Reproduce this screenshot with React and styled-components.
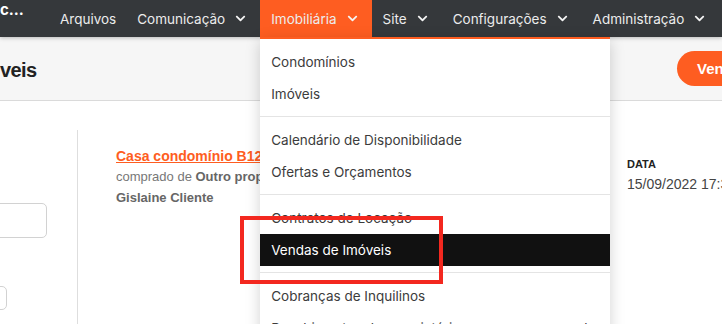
import React from 'react';
import styled, { createGlobalStyle } from 'styled-components';
import { FaChevronDown } from 'react-icons/fa';

const GlobalStyle = createGlobalStyle`
    html, body {
        margin: 0;
        padding: 0;
        background: #fff;
        overflow: hidden;
    }
    * { box-sizing: border-box; }
`;

const ORANGE = '#fe5d21';

// menus do topo
const navItems = [
    { label: 'Arquivos', caret: false },
    { label: 'Comunicação', caret: true },
    { label: 'Imobiliária', caret: true, active: true },
    { label: 'Site', caret: true },
    { label: 'Configurações', caret: true },
    { label: 'Administração', caret: true },
];

// itens do dropdown da Imobiliária, null = divisor
const menuItems = [
    'Condomínios',
    'Imóveis',
    null,
    'Calendário de Disponibilidade',
    'Ofertas e Orçamentos',
    null,
    'Contratos de Locação',
    'Vendas de Imóveis',
    null,
    'Cobranças de Inquilinos',
    'Recebimentos de proprietários e repasses a receber',
];

const App = () => {
    return (
        <Page>
            <GlobalStyle />
            <NavBar>
                <Brand>c...</Brand>
                {navItems.map((item) => (
                    <NavItem key={item.label} $active={item.active} $caret={item.caret}>
                        {item.label}
                        {item.caret && <Caret />}
                        {item.active && (
                            <Dropdown>
                                {menuItems.map((m, i) =>
                                    m === null ? (
                                        <MenuDivider key={i} />
                                    ) : (
                                        <MenuItem key={i} $active={m === 'Vendas de Imóveis'}>
                                            {m}
                                        </MenuItem>
                                    )
                                )}
                            </Dropdown>
                        )}
                    </NavItem>
                ))}
            </NavBar>

            <PageHeader>
                <Title>veis</Title>
                <ActionButton>Vender imóvel</ActionButton>
            </PageHeader>

            <Content>
                <Sidebar>
                    <FieldBox $w={67} $h={35} />
                    <FieldBox $w={27} $h={24} $mt={48} />
                </Sidebar>
                <Main>
                    <SaleRow>
                        <div>
                            <SaleTitle href="#">Casa condomínio B12 - Lote 4</SaleTitle>
                            <SaleLine>
                                comprado de <b>Outro proprietário</b>
                            </SaleLine>
                            <SaleLine>
                                <b>Gislaine Cliente</b>
                            </SaleLine>
                        </div>
                        <DateCol>
                            <Label>DATA</Label>
                            <DateValue>15/09/2022 17:30</DateValue>
                        </DateCol>
                    </SaleRow>
                </Main>
            </Content>

            <Highlight />
        </Page>
    );
};

const Page = styled.div`
    position: relative;
    width: 722px;
    height: 324px;
    overflow: hidden;
    background: #fff;
    font-family: Inter, "Noto Sans", sans-serif;
`;

const NavBar = styled.nav`
    position: relative;
    z-index: 3;
    display: flex;
    align-items: stretch;
    height: 37px;
    background: #35383b;
    box-shadow: 0 1px 4px rgba(0, 0, 0, 0.25);
`;

const Brand = styled.div`
    flex-shrink: 0;
    width: 50px;
    padding-top: 1px;
    color: #fff;
    font-size: 15px;
    font-weight: 700;
    line-height: 18px;
`;

const NavItem = styled.div`
    position: relative;
    flex-shrink: 0;
    display: flex;
    align-items: center;
    padding: ${(props) => (props.$caret ? '0 14px 0 11px' : '0 10px')};
    color: #ececec;
    font-size: 13.5px;
    white-space: nowrap;
    background: ${(props) => (props.$active ? ORANGE : 'transparent')};
`;

const Caret = styled(FaChevronDown)`
    margin-left: 10px;
    font-size: 11px;
    color: #f4f4f4;
`;

const Dropdown = styled.div`
    position: absolute;
    top: 100%;
    left: 0;
    width: 350px;
    padding-top: 7px;
    background: #fff;
    border-top: 2px solid ${ORANGE};
    box-shadow: 0 4px 14px rgba(0, 0, 0, 0.18);
`;

const MenuItem = styled.div`
    display: flex;
    align-items: center;
    height: 32px;
    padding: 0 11px;
    font-size: 13.5px;
    white-space: nowrap;
    overflow: hidden;
    color: ${(props) => (props.$active ? '#fff' : '#3c3c3c')};
    background: ${(props) => (props.$active ? '#111' : 'transparent')};
`;

const MenuDivider = styled.div`
    height: 1px;
    margin: 6px 0 7px;
    background: #e4e4e4;
`;

const PageHeader = styled.header`
    display: flex;
    align-items: center;
    height: 64px;
    background: #f6f6f6;
    border-bottom: 1px solid #dadada;
    font-family: "Liberation Sans", Arial, sans-serif;
`;

const Title = styled.h1`
    flex: 1;
    margin: 3px 0 0;
    font-size: 20px;
    font-weight: 700;
    letter-spacing: -0.6px;
    color: #222;
`;

const ActionButton = styled.button`
    flex-shrink: 0;
    width: 120px;
    height: 35px;
    margin-right: -75px;
    padding: 0 20px;
    border: none;
    border-radius: 18px;
    background: ${ORANGE};
    color: #fff;
    font-family: "Liberation Sans", Arial, sans-serif;
    font-size: 15px;
    font-weight: 700;
    text-align: left;
    white-space: nowrap;
    overflow: hidden;
`;

const Content = styled.div`
    display: flex;
    padding-top: 29px;
    height: 223px;
    font-family: "Liberation Sans", Arial, sans-serif;
`;

const Sidebar = styled.aside`
    flex-shrink: 0;
    width: 98px;
    margin-left: -20px;
    padding-top: 73px;
    border-right: 1px solid #dedede;
`;

const FieldBox = styled.div`
    width: ${(props) => props.$w}px;
    height: ${(props) => props.$h}px;
    margin-top: ${(props) => props.$mt || 0}px;
    border: 1px solid #d2d2d2;
    border-radius: 5px;
    background: #fff;
`;

const Main = styled.main`
    flex: 1;
    padding: 16px 0 0 38px;
`;

const SaleRow = styled.div`
    display: grid;
    grid-template-columns: 511px 1fr;
`;

const SaleTitle = styled.a`
    display: block;
    line-height: 20px;
    font-size: 14px;
    font-weight: 700;
    color: ${ORANGE};
    text-decoration: underline;
    white-space: nowrap;
`;

const SaleLine = styled.div`
    line-height: 21px;
    font-size: 13px;
    color: #777;
    white-space: nowrap;
    b {
        color: #666;
    }
`;

const DateCol = styled.div`
    padding-top: 10px;
    white-space: nowrap;
`;

const Label = styled.div`
    line-height: 16px;
    font-size: 11px;
    font-weight: 700;
    color: #222;
`;

const DateValue = styled.div`
    margin-top: 2px;
    line-height: 20px;
    font-size: 14px;
    color: #444;
`;

// marcação vermelha por cima do print
const Highlight = styled.div`
    position: absolute;
    z-index: 10;
    left: 240px;
    top: 216px;
    width: 203px;
    height: 68px;
    border: 4px solid #f3281f;
    pointer-events: none;
`;

export default App;
